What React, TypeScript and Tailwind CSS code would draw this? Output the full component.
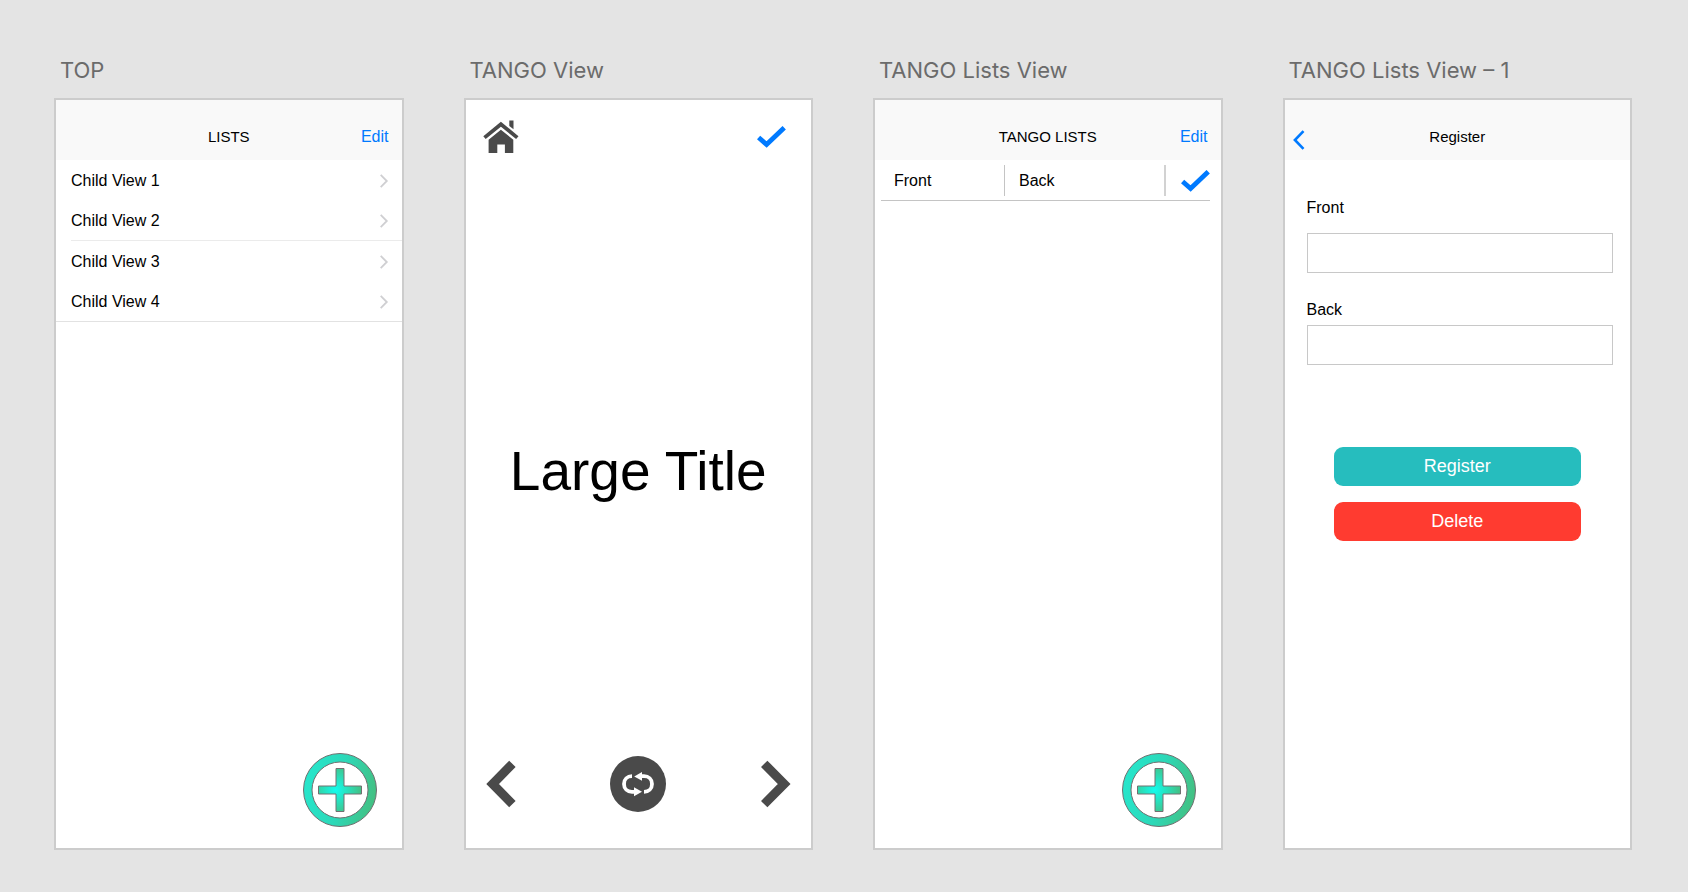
import React from 'react';

const sans = "font-['Liberation_Sans',Arial,sans-serif]";

function Artboard({ title, children }: { title: string; children: React.ReactNode }) {
  return (
    <section className="flex flex-col min-w-0">
      <h2 className="h-[98px] pt-14 pl-[6px] text-[22px] leading-7 text-[#6b6b6b] whitespace-nowrap font-['Inter',sans-serif]">
        {title}
      </h2>
      <div className={`flex-1 flex flex-col bg-white border-2 border-[#cccccc] text-black ${sans}`}>
        {children}
      </div>
    </section>
  );
}

function NavBar({ title, left, right }: { title: string; left?: React.ReactNode; right?: React.ReactNode }) {
  return (
    <header className="h-[60px] pt-[14px] pl-[13px] pr-[13px] grid grid-cols-[1fr_auto_1fr] items-center bg-[#f9f9f9]">
      <div className="flex">{left}</div>
      <h1 className="text-[15px] leading-5">{title}</h1>
      <div className="flex justify-end">{right}</div>
    </header>
  );
}

function EditButton() {
  return <button className="text-base leading-5 text-[#007aff]">Edit</button>;
}

function CheckIcon() {
  return (
    <svg width="29" height="22" viewBox="0 0 29 22" aria-hidden="true">
      <path d="M1.600 11.500 9.600 18.600 27.200 1.700" fill="none" stroke="#007aff" strokeWidth="4.800" />
    </svg>
  );
}

function HomeIcon() {
  return (
    <svg width="36" height="34" viewBox="0 0 36 34" fill="#4a4a4a" aria-hidden="true">
      <path d="M26.300 .5h4.200v8.800l-4.200-3.400z" />
      <path d="M1.500 17.600 17.900 4.200 34.300 17.600" fill="none" stroke="#4a4a4a" strokeWidth="3.800" />
      <path d="M17.900 9.700 30.300 19.700V33H21.900V24.500h-7.600V33H5.600V19.700z" />
    </svg>
  );
}

function PrevIcon() {
  return (
    <svg width="30" height="48" viewBox="0 0 30 48" aria-hidden="true">
      <path d="M26.400 3.800 6.600 24 26.400 44.200" fill="none" stroke="#4a4a4a" strokeWidth="9" />
    </svg>
  );
}

function NextIcon() {
  return (
    <svg width="30" height="48" viewBox="0 0 30 48" aria-hidden="true">
      <path d="M3.200 3.800 23.200 24 3.200 44.200" fill="none" stroke="#4a4a4a" strokeWidth="9" />
    </svg>
  );
}

function FlipIcon() {
  return (
    <svg width="56" height="56" viewBox="0 0 56 56" aria-hidden="true">
      <circle cx="28" cy="28" r="28" fill="#4a4a4a" />
      <g fill="none" stroke="#fff" strokeWidth="3.800">
        <path d="M22 20.200c-4.600 0-8 3.200-8 7.800s3.400 7.800 8 7.800h3" />
        <path d="M34 35.800c4.600 0 8-3.200 8-7.800s-3.400-7.800-8-7.800h-3" />
      </g>
      <path d="M24 31.200 32 35.800 24 40.200z" fill="#fff" />
      <path d="M32 16 24.200 20.400 32 24.800z" fill="#fff" />
    </svg>
  );
}

function AddButton({ id }: { id: string }) {
  return (
    <button aria-label="Add" className="self-end mt-auto mr-[25px] mb-[21px]">
      <svg width="74" height="74" viewBox="0 0 74 74" className="block">
        <defs>
          <linearGradient id={`${id}-ring`} x1="0" y1="0.4" x2="1" y2="0.6">
            <stop offset="0" stopColor="#26e6cc" />
            <stop offset="0.5" stopColor="#2cd8b8" />
            <stop offset="1" stopColor="#44bf80" />
          </linearGradient>
          <radialGradient id={`${id}-plus`} cx="0.4" cy="0.5" r="0.6">
            <stop offset="0" stopColor="#12fcee" />
            <stop offset="1" stopColor="#44bf82" />
          </radialGradient>
        </defs>
        <path
          d="M37 .5a36.500 36.500 0 1 0 0 73a36.500 36.500 0 1 0 0-73zM37 9a28 28 0 1 1 0 56a28 28 0 1 1 0-56z"
          fill={`url(#${id}-ring)`}
          fillRule="evenodd"
          stroke="#707070"
        />
        <path
          d="M33 15.500h8v17.500h17.500v8H41v17.500h-8V41H15.500v-8H33z"
          fill={`url(#${id}-plus)`}
          stroke="#707070"
        />
      </svg>
    </button>
  );
}

function ChildRow({ label }: { label: string }) {
  return (
    <li>
      <a href="#" className="h-10 pt-[2px] pl-[15px] pr-[13px] flex items-center justify-between text-base leading-5">
        {label}
        <svg width="10" height="14" viewBox="0 0 10 14" aria-hidden="true">
          <path d="M1.700 .9 7.800 7 1.700 13.100" fill="none" stroke="#cfcfd2" strokeWidth="1.800" />
        </svg>
      </a>
    </li>
  );
}

function TopView() {
  return (
    <Artboard title="TOP">
      <NavBar title="LISTS" right={<EditButton />} />
      <ul>
        <ChildRow label="Child View 1" />
        <ChildRow label="Child View 2" />
        <li aria-hidden="true" className="h-px ml-[15px] bg-[#ebebeb]" />
        <ChildRow label="Child View 3" />
        <ChildRow label="Child View 4" />
        <li aria-hidden="true" className="h-px bg-[#e2e2e2]" />
      </ul>
      <AddButton id="top" />
    </Artboard>
  );
}

function TangoView() {
  return (
    <Artboard title="TANGO View">
      <div className="h-[73px] pl-[17px] pr-[25px] flex items-center justify-between">
        <button aria-label="Home">
          <HomeIcon />
        </button>
        <button aria-label="Done">
          <CheckIcon />
        </button>
      </div>
      <div className="flex-1 pt-3 flex items-center justify-center">
        <p className="text-[55px] leading-[60px] whitespace-nowrap">Large Title</p>
      </div>
      <div className="px-5 pb-9 flex items-center justify-between">
        <button aria-label="Previous">
          <PrevIcon />
        </button>
        <button aria-label="Flip">
          <FlipIcon />
        </button>
        <button aria-label="Next">
          <NextIcon />
        </button>
      </div>
    </Artboard>
  );
}

function TangoListsView() {
  return (
    <Artboard title="TANGO Lists View">
      <NavBar title="TANGO LISTS" right={<EditButton />} />
      <div className="ml-[6px] mr-[11px] pt-[5px] pb-1 flex border-b border-[#c4c4c4] text-base leading-5">
        <div className="w-[124px] h-[31px] pl-[13px] flex items-center border-r border-[#c4c4c4]">Front</div>
        <div className="flex-1 h-[31px] pl-[14px] flex items-center border-r-2 border-[#d2d2d2]">Back</div>
        <button aria-label="Done" className="w-11 flex items-center justify-end">
          <CheckIcon />
        </button>
      </div>
      <AddButton id="lists" />
    </Artboard>
  );
}

function RegisterView() {
  return (
    <Artboard title="TANGO Lists View – 1">
      <NavBar
        title="Register"
        left={
          <button aria-label="Back" className="pt-[6px] -ml-[5px]">
            <svg width="12" height="20" viewBox="0 0 12 20" aria-hidden="true">
              <path d="M10.500 1.200 1.900 10l8.600 8.800" fill="none" stroke="#007aff" strokeWidth="2.600" />
            </svg>
          </button>
        }
      />
      <form className="pl-[22px] pr-[17px] pt-[38px] flex flex-col text-base leading-5">
        <label htmlFor="front">Front</label>
        <input id="front" type="text" className="h-10 mt-[15px] px-2 border border-[#c8c8c8] outline-none" />
        <label htmlFor="back" className="mt-[27px]">
          Back
        </label>
        <input id="back" type="text" className="h-10 mt-[5px] px-2 border border-[#c8c8c8] outline-none" />
        <div className="mt-[82px] ml-[27px] mr-8 flex flex-col gap-4 text-lg text-white">
          <button type="button" className="h-[39px] pb-[2px] rounded-[9px] bg-[#26bdbe]">
            Register
          </button>
          <button type="button" className="h-[39px] pb-[2px] rounded-[9px] bg-[#ff3b30]">
            Delete
          </button>
        </div>
      </form>
    </Artboard>
  );
}

function App() {
  return (
    <main className="min-h-screen pl-[54px] pr-[56px] pb-[42px] grid grid-cols-4 gap-[60px] bg-[#e4e4e4]">
      <TopView />
      <TangoView />
      <TangoListsView />
      <RegisterView />
    </main>
  );
}

export default App;
